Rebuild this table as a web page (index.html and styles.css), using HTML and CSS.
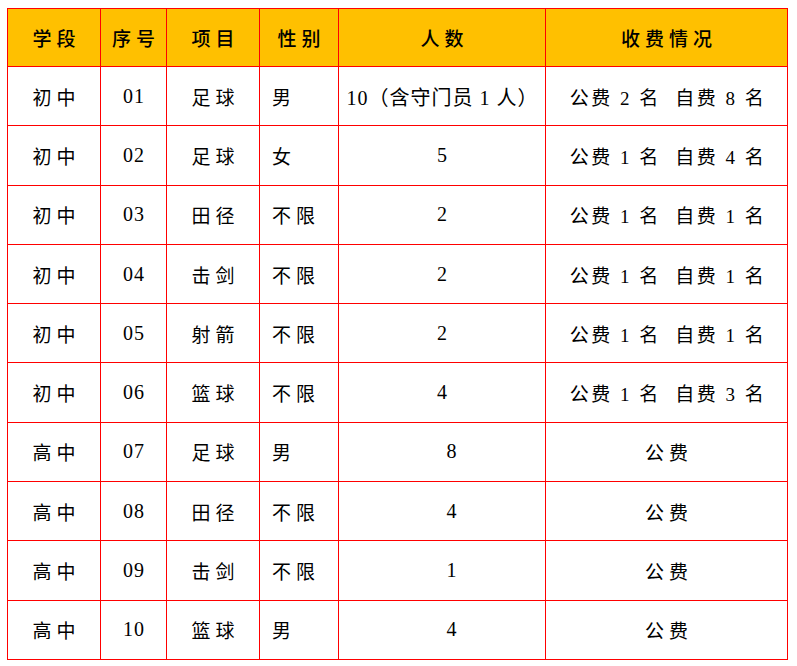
FILE: index.html
```html
<!DOCTYPE html>
<html lang="zh">
<head>
<meta charset="utf-8">
<title>收费情况</title>
<link rel="stylesheet" href="styles.css">
</head>
<body>
<table class="grid">
  <colgroup>
    <col class="c1"><col class="c2"><col class="c3"><col class="c4"><col class="c5"><col class="c6">
  </colgroup>
  <thead>
    <tr class="head">
      <th>学段</th><th>序号</th><th>项目</th><th>性别</th><th>人数</th><th>收费情况</th>
    </tr>
  </thead>
  <tbody>
    <tr><td>初中</td><td class="num">01</td><td>足球</td><td class="left">男</td><td class="num">10（含守门员 1 人）</td><td class="fee">公费 2 名&nbsp; 自费 8 名</td></tr>
    <tr><td>初中</td><td class="num">02</td><td>足球</td><td class="left">女</td><td class="num">5</td><td class="fee">公费 1 名&nbsp; 自费 4 名</td></tr>
    <tr><td>初中</td><td class="num">03</td><td>田径</td><td class="left">不限</td><td class="num">2</td><td class="fee">公费 1 名&nbsp; 自费 1 名</td></tr>
    <tr><td>初中</td><td class="num">04</td><td>击剑</td><td class="left">不限</td><td class="num">2</td><td class="fee">公费 1 名&nbsp; 自费 1 名</td></tr>
    <tr><td>初中</td><td class="num">05</td><td>射箭</td><td class="left">不限</td><td class="num">2</td><td class="fee">公费 1 名&nbsp; 自费 1 名</td></tr>
    <tr><td>初中</td><td class="num">06</td><td>篮球</td><td class="left">不限</td><td class="num">4</td><td class="fee">公费 1 名&nbsp; 自费 3 名</td></tr>
    <tr><td>高中</td><td class="num">07</td><td>足球</td><td class="left">男</td><td class="num shift">8</td><td>公费</td></tr>
    <tr><td>高中</td><td class="num">08</td><td>田径</td><td class="left">不限</td><td class="num shift">4</td><td>公费</td></tr>
    <tr><td>高中</td><td class="num">09</td><td>击剑</td><td class="left">不限</td><td class="num shift">1</td><td>公费</td></tr>
    <tr><td>高中</td><td class="num">10</td><td>篮球</td><td class="left">男</td><td class="num shift">4</td><td>公费</td></tr>
  </tbody>
</table>
</body>
</html>
```
FILE: styles.css
```css
html, body {
  background: #ffffff;
}
body {
  margin: 8px 7px;
  font-family: "Liberation Serif", "Noto Sans CJK SC", serif;
  color: #000000;
}
.grid {
  border-collapse: collapse;
  table-layout: fixed;
  width: 780px;
}
.c1 { width: 93px; }
.c2 { width: 66px; }
.c3 { width: 93px; }
.c4 { width: 79px; }
.c5 { width: 207px; }
.c6 { width: 242px; }
.grid th, .grid td {
  border: 1px solid #ff0000;
  text-align: center;
  vertical-align: middle;
  padding: 0 0 0 5px;
  font-size: 19px;
  letter-spacing: 5px;
  white-space: nowrap;
}
.grid th {
  background: #ffc000;
  font-weight: 500;
  height: 57px;
}
.grid td {
  font-weight: 400;
  height: 58.3px;
}
.grid td.left {
  text-align: left;
  padding-left: 12px;
}
.grid td.num {
  font-size: 20px;
  letter-spacing: 1px;
  padding-left: 1px;
}
.grid td.fee {
  letter-spacing: 2.5px;
  word-spacing: 0;
  padding-left: 3px;
}
.grid td.num.shift {
  padding-left: 20px;
}
```
